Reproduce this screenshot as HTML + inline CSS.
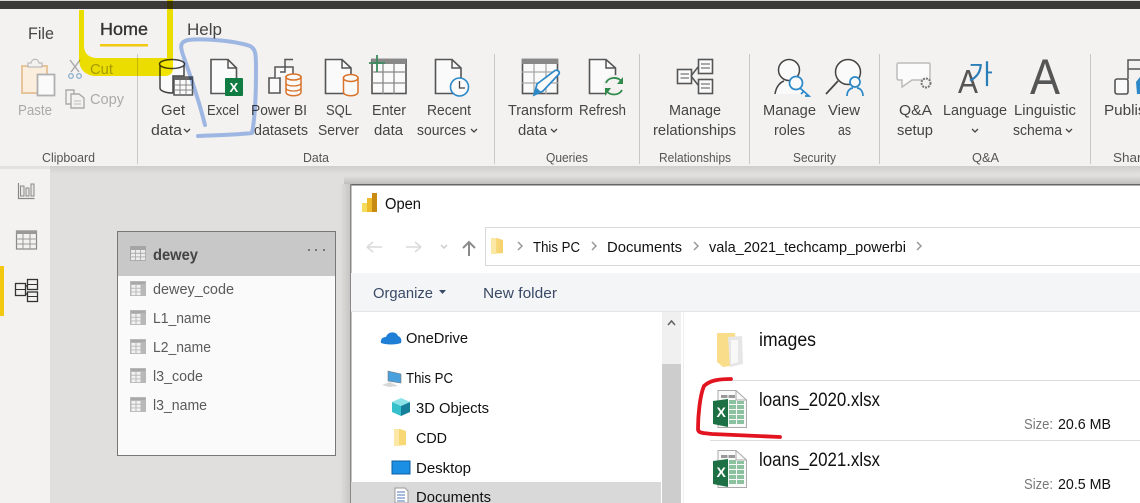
<!DOCTYPE html>
<html><head><meta charset="utf-8">
<style>
html,body{margin:0;padding:0;background:#e0dfdd;width:1140px;height:503px;overflow:hidden}
svg{display:block}
text{font-family:"Liberation Sans","Noto Sans CJK KR",sans-serif}
.r{font-size:15px;fill:#444}
.g{font-size:13px;fill:#555}
.d{font-size:15px;fill:#aaa}
.f{font-size:15px;fill:#111}
.n{font-size:15px;fill:#3a4a66}
.b{font-size:19px;fill:#111}
.s{font-size:15px;fill:#777}
.c{font-size:15px;fill:#5a5a5a}
.ic{fill:#fafafa;stroke:#555;stroke-width:1.6}
.or{fill:#fafafa;stroke:#d9732a;stroke-width:1.5}
</style></head><body>
<svg width="1140" height="503" viewBox="0 0 1140 503" xmlns="http://www.w3.org/2000/svg">
<defs>
<linearGradient id="shadow" x1="0" y1="0" x2="0" y2="1"><stop offset="0" stop-color="#cfcecc"/><stop offset="1" stop-color="#e0dfdd"/></linearGradient>
<linearGradient id="sht" x1="0" y1="0" x2="0" y2="1"><stop offset="0" stop-color="#e0dfdd"/><stop offset="1" stop-color="#c0bfbd"/></linearGradient>
<linearGradient id="shl" x1="0" y1="0" x2="1" y2="0"><stop offset="0" stop-color="#e0dfdd"/><stop offset="1" stop-color="#c4c3c1"/></linearGradient>
<linearGradient id="fold" x1="0" y1="0" x2="1" y2="0"><stop offset="0" stop-color="#fbe08a"/><stop offset="1" stop-color="#f5cf6a"/></linearGradient>
<g id="fi">
<rect x="0" y="0" width="16" height="15" fill="#b8b8b8"/>
<rect x="1" y="1" width="14" height="2" fill="#a8a8a8"/>
<g fill="#f0f0f0"><rect x="1.500" y="4" width="4" height="2.800"/><rect x="6.500" y="4" width="4" height="2.800"/><rect x="1.500" y="7.700" width="4" height="2.800"/><rect x="6.500" y="7.700" width="4" height="2.800"/><rect x="1.500" y="11.300" width="4" height="2.800"/><rect x="6.500" y="11.300" width="4" height="2.800"/></g>
</g>
<g id="fh">
<rect x="0" y="0" width="16" height="15" fill="#a5a5a5"/>
<g fill="#ececec"><rect x="1" y="4" width="4.200" height="2.800"/><rect x="6" y="4" width="4.200" height="2.800"/><rect x="11" y="4" width="4.200" height="2.800"/><rect x="1" y="7.700" width="4.200" height="2.800"/><rect x="6" y="7.700" width="4.200" height="2.800"/><rect x="11" y="7.700" width="4.200" height="2.800"/><rect x="1" y="11.300" width="4.200" height="2.800"/><rect x="6" y="11.300" width="4.200" height="2.800"/><rect x="11" y="11.300" width="4.200" height="2.800"/></g>
</g>
<g id="xl">
<path d="M5 .5H23L33.5 10V37.5H5Z" fill="#fafafa" stroke="#aaa"/>
<path d="M23 .5V10H33.5" fill="none" stroke="#aaa"/>
<rect x="8" y="5" width="6.500" height="3" fill="#999"/><rect x="15.500" y="5" width="6.500" height="3" fill="#999"/>
<g fill="#8cc2a0"><rect x="16" y="10" width="7" height="4"/><rect x="24" y="11" width="7" height="3"/><rect x="16" y="15" width="7" height="4"/><rect x="24" y="15" width="7" height="4"/><rect x="16" y="20" width="7" height="4"/><rect x="24" y="20" width="7" height="4"/><rect x="16" y="25" width="7" height="4"/><rect x="24" y="25" width="7" height="4"/><rect x="16" y="30" width="7" height="4"/><rect x="24" y="30" width="7" height="4"/></g>
<path d="M0 11L15 9V37L0 34Z" fill="#1d7044"/>
<text x="3.500" y="27" font-size="14" font-weight="bold" fill="#fff">X</text>
</g>
</defs>

<!-- base -->
<rect width="1140" height="503" fill="#e0dfdd"/>
<rect y="0" width="1140" height="1" fill="#d8d8d8"/>
<rect y="1" width="1140" height="8" fill="#3b3a39"/>
<rect y="9" width="1140" height="157" fill="#f3f2f1"/>
<rect y="166" x="50" width="1090" height="8" fill="url(#shadow)"/>
<rect y="166" x="0" width="50" height="337" fill="#f3f2f1"/>
<rect y="166" x="0" width="50" height="3" fill="#e2e1df"/>

<!-- tabs -->
<text x="28" y="39" font-size="17" fill="#444" textLength="26" lengthAdjust="spacingAndGlyphs">File</text>
<text x="100" y="35" font-size="17.500" fill="#333" stroke="#333" stroke-width=".35" textLength="48" lengthAdjust="spacingAndGlyphs">Home</text>
<rect x="100" y="44" width="48" height="2.500" fill="#f2c811"/>
<text x="187" y="35" font-size="17" fill="#444" textLength="35" lengthAdjust="spacingAndGlyphs">Help</text>

<!-- separators -->
<g fill="#c9c8c6"><rect x="137" y="54" width="1" height="110"/><rect x="494" y="54" width="1" height="110"/><rect x="639" y="54" width="1" height="110"/><rect x="749" y="54" width="1" height="110"/><rect x="879" y="54" width="1" height="110"/><rect x="1090" y="54" width="1" height="110"/></g>

<!-- clipboard icons -->
<path d="M22 66H47V93H22Z" fill="#fbeedd" stroke="#e6c49c" stroke-width="2"/>
<path d="M28 66V63H31C32 58 38 58 39 63H42V67H28Z" fill="#f3f2f1" stroke="#bbb" stroke-width="1.200"/>
<rect x="37.500" y="74.500" width="17" height="21" fill="#fafafa" stroke="#b0b0b0" stroke-width="1.800"/>
<path d="M70 60L79 72M80 60L71 72" stroke="#a8a8a8" stroke-width="1.400" fill="none"/>
<circle cx="71" cy="76" r="2.300" fill="none" stroke="#8fb3cf" stroke-width="1.400"/><circle cx="79" cy="76" r="2.300" fill="none" stroke="#8fb3cf" stroke-width="1.400"/>
<path d="M66 90H74L74 104H66Z" fill="#f3f2f1" stroke="#aaa" stroke-width="1.400"/>
<path d="M71 94H79L84 98V108H71Z" fill="#f3f2f1" stroke="#aaa" stroke-width="1.400"/>
<path d="M74 101H81M74 104H81" stroke="#bbb"/>
<text class="d" x="18" y="115" textLength="34" lengthAdjust="spacingAndGlyphs">Paste</text>
<text class="d" x="90" y="74" textLength="23" lengthAdjust="spacingAndGlyphs">Cut</text>
<text class="d" x="90" y="104" textLength="34" lengthAdjust="spacingAndGlyphs">Copy</text>
<text class="g" x="42" y="162" textLength="53" lengthAdjust="spacingAndGlyphs">Clipboard</text>

<!-- get data -->
<path d="M160 64V88C160 91 166 93 173 93V76H184V64Z" fill="#fafafa" stroke="#444" stroke-width="1.500"/>
<ellipse cx="172" cy="64" rx="12.500" ry="4.500" fill="#fafafa" stroke="#444" stroke-width="1.500"/>
<path d="M174 77H192.500V95H174Z" fill="#fafafa" stroke="#555" stroke-width="1.500"/>
<rect x="174" y="76.500" width="19" height="3.500" fill="#666"/>
<path d="M180 80V95M186 80V95M174 85H193M174 90H193" stroke="#888"/>
<!-- excel -->
<path d="M211 59.500H228L236.500 68V93.500H211Z" class="ic"/><path d="M228 59.500V68H236.500" fill="none" stroke="#555" stroke-width="1.500"/>
<rect x="225" y="78" width="18" height="18" rx="1" fill="#107c41"/>
<text x="229.500" y="92" font-size="13" font-weight="bold" fill="#fff">X</text>
<!-- PBI datasets -->
<path d="M269 78H280V93H269Z" class="ic"/><path d="M275 78V67H293V74" fill="#fafafa" stroke="#555" stroke-width="1.500"/><path d="M280 72H285V59.500H293" fill="none" stroke="#555" stroke-width="1.500"/>
<path d="M286 77V92C286 97 301 97 301 92V77Z" class="or"/><ellipse cx="293.500" cy="77" rx="7.500" ry="3" class="or"/><path d="M286 83C286 87 301 87 301 83M286 88C286 92 301 92 301 88" fill="none" stroke="#d9732a" stroke-width="1.300"/>
<!-- SQL -->
<path d="M325.500 59.500H342L351 68V93.500H325.500Z" class="ic"/><path d="M342 59.500V68H351" fill="none" stroke="#555" stroke-width="1.500"/>
<path d="M343.500 78V92C343.500 97 358 97 358 92V78Z" class="or"/><ellipse cx="350.700" cy="78" rx="7.300" ry="3.500" class="or"/>
<!-- enter -->
<rect x="372" y="59.500" width="34" height="34" class="ic"/><rect x="372" y="59" width="34" height="5" fill="#888"/>
<path d="M383 64V94M394 64V94M372 72H406M372 83H406" stroke="#888" stroke-width="1.300"/>
<path d="M377 55V72M369 63H385" stroke="#3b8a5c" stroke-width="1.800"/>
<!-- recent -->
<path d="M435.500 59.500H452L461 68V93.500H435.500Z" class="ic"/><path d="M452 59.500V68H461" fill="none" stroke="#555" stroke-width="1.500"/>
<circle cx="459.500" cy="87" r="9" fill="#fafafa" stroke="#2b88c8" stroke-width="1.600"/><path d="M459.500 81V88H465" fill="none" stroke="#444" stroke-width="1.300"/>
<!-- transform -->
<rect x="522.500" y="59.500" width="35" height="34" class="ic"/><rect x="522" y="59" width="36" height="5" fill="#888"/>
<path d="M534 64V94M546 64V94M522 72H558M522 83H558" stroke="#aaa" stroke-width="1.300"/>
<path d="M534 95L537 84L555 70.500C558 69.500 560 72 559 74L543 91Z" fill="#fafafa" stroke="#2b88c8" stroke-width="1.700"/><path d="M534 95L537 88L541 92Z" fill="#2b88c8"/>
<!-- refresh -->
<path d="M589.500 59.500H606L615.500 68V93.500H589.500Z" class="ic"/><path d="M606 59.500V68H615.500" fill="none" stroke="#555" stroke-width="1.500"/>
<circle cx="614" cy="86" r="11" fill="#f3f2f1"/>
<path d="M606 83C608 77 618 76 622 82M622 90C619 96 609 96 606 90" fill="none" stroke="#2f8a4c" stroke-width="1.800"/><path d="M623 77V84H617ZM605 96V88H611Z" fill="#2f8a4c"/>
<!-- manage rel -->
<rect x="677.500" y="69.500" width="14" height="14" class="ic"/><rect x="698.500" y="59.500" width="14" height="14" class="ic"/><rect x="698.500" y="79.500" width="14" height="14" class="ic"/>
<path d="M691 76L698 67M691 76L698 85" stroke="#555" stroke-width="1.500"/>
<path d="M680.500 74H689M680.500 78H689M701 64H710M701 68H710M701 84H710M701 88H710" stroke="#777" stroke-width="1.300"/>
<!-- manage roles -->
<circle cx="789" cy="70" r="10.500" fill="#fafafa" stroke="#444" stroke-width="1.500"/>
<path d="M775 94C776 86 781 82 785 81C790 83 794 82 798 81L806 94Z" fill="#fafafa"/><path d="M775 94C776 88 779 83 784 81" fill="none" stroke="#444" stroke-width="1.500"/>
<circle cx="796" cy="83" r="6.500" fill="#fafafa" stroke="#2b88c8" stroke-width="1.700"/><path d="M800 88L809 96H805M804 91L801 94" fill="none" stroke="#2b88c8" stroke-width="1.700"/>
<!-- view as -->
<circle cx="848" cy="72" r="12.500" fill="#fafafa" stroke="#444" stroke-width="1.500"/><path d="M838 81L826 94" stroke="#444" stroke-width="1.700"/>
<circle cx="855" cy="82" r="5" fill="#fafafa" stroke="#2b88c8" stroke-width="1.700"/><path d="M847 96C847 90 851 88 853 88M857 88C860 88 863 91 863 96" fill="none" stroke="#2b88c8" stroke-width="1.700"/>
<!-- qa -->
<path d="M898 63H929Q930 63 930 65V80H912L902 87V80H899Q897 80 897 78V65Q897 63 898 63Z" fill="#fbfbfb" stroke="#bbb" stroke-width="1.500"/>
<circle cx="926" cy="83" r="4.500" fill="#f3f2f1" stroke="#777" stroke-width="2" stroke-dasharray="2 1"/>
<!-- language -->
<text x="958" y="93" font-size="33" fill="#555" textLength="20" lengthAdjust="spacingAndGlyphs">A</text>
<text x="968" y="84" font-size="27" fill="#2b7fb8">가</text>
<!-- linguistic -->
<text x="1030" y="94" font-size="50" fill="#555" textLength="30" lengthAdjust="spacingAndGlyphs">A</text>
<!-- publish -->
<rect x="1115" y="79" width="13" height="15" rx="2" class="ic"/><path d="M1128 79V69H1140M1128 69V60H1140" fill="none" stroke="#555" stroke-width="1.500"/><path d="M1136 82L1140 77V94H1137Z" fill="#2b88c8"/>

<!-- ribbon labels -->
<text class="r" x="161" y="115" textLength="24" lengthAdjust="spacingAndGlyphs">Get</text>
<text class="r" x="151" y="135" textLength="31" lengthAdjust="spacingAndGlyphs">data</text>
<text class="r" x="207" y="115" textLength="32" lengthAdjust="spacingAndGlyphs">Excel</text>
<text class="r" x="251" y="115" textLength="56" lengthAdjust="spacingAndGlyphs">Power BI</text>
<text class="r" x="254" y="135" textLength="54" lengthAdjust="spacingAndGlyphs">datasets</text>
<text class="r" x="326" y="115" textLength="26" lengthAdjust="spacingAndGlyphs">SQL</text>
<text class="r" x="318" y="135" textLength="41" lengthAdjust="spacingAndGlyphs">Server</text>
<text class="r" x="372" y="115" textLength="34" lengthAdjust="spacingAndGlyphs">Enter</text>
<text class="r" x="374" y="135" textLength="29" lengthAdjust="spacingAndGlyphs">data</text>
<text class="r" x="427" y="115" textLength="44" lengthAdjust="spacingAndGlyphs">Recent</text>
<text class="r" x="417" y="135" textLength="49" lengthAdjust="spacingAndGlyphs">sources</text>
<text class="r" x="508" y="115" textLength="65" lengthAdjust="spacingAndGlyphs">Transform</text>
<text class="r" x="518" y="135" textLength="29" lengthAdjust="spacingAndGlyphs">data</text>
<text class="r" x="579" y="115" textLength="47" lengthAdjust="spacingAndGlyphs">Refresh</text>
<text class="r" x="669" y="115" textLength="52" lengthAdjust="spacingAndGlyphs">Manage</text>
<text class="r" x="653" y="135" textLength="83" lengthAdjust="spacingAndGlyphs">relationships</text>
<text class="r" x="763" y="115" textLength="53" lengthAdjust="spacingAndGlyphs">Manage</text>
<text class="r" x="774" y="135" textLength="31" lengthAdjust="spacingAndGlyphs">roles</text>
<text class="r" x="828" y="115" textLength="32" lengthAdjust="spacingAndGlyphs">View</text>
<text class="r" x="838" y="135" textLength="13" lengthAdjust="spacingAndGlyphs">as</text>
<text class="r" x="899" y="115" textLength="33" lengthAdjust="spacingAndGlyphs">Q&amp;A</text>
<text class="r" x="897" y="135" textLength="36" lengthAdjust="spacingAndGlyphs">setup</text>
<text class="r" x="943" y="115" textLength="64" lengthAdjust="spacingAndGlyphs">Language</text>
<text class="r" x="1014" y="115" textLength="62" lengthAdjust="spacingAndGlyphs">Linguistic</text>
<text class="r" x="1013" y="135" textLength="49" lengthAdjust="spacingAndGlyphs">schema</text>
<text class="r" x="1104" y="115" textLength="50" lengthAdjust="spacingAndGlyphs">Publish</text>
<g fill="none" stroke="#444" stroke-width="1.300"><path d="M184 129L187 132L190 129M471 129L474 132L477 129M551 129L554 132L557 129M972 129L975 132L978 129M1066 129L1069 132L1072 129"/></g>
<text class="g" x="303" y="162" textLength="26" lengthAdjust="spacingAndGlyphs">Data</text>
<text class="g" x="546" y="162" textLength="42" lengthAdjust="spacingAndGlyphs">Queries</text>
<text class="g" x="659" y="162" textLength="72" lengthAdjust="spacingAndGlyphs">Relationships</text>
<text class="g" x="793" y="162" textLength="43" lengthAdjust="spacingAndGlyphs">Security</text>
<text class="g" x="972" y="162" textLength="27" lengthAdjust="spacingAndGlyphs">Q&amp;A</text>
<text class="g" x="1113" y="162" textLength="36" lengthAdjust="spacingAndGlyphs">Share</text>

<!-- left rail -->
<rect x="0" y="266" width="4" height="50" fill="#f2c811"/>
<path d="M18.500 183V198.500H34.500" fill="none" stroke="#888" stroke-width="1.200"/>
<path d="M20.500 186H24V196H20.500ZM26 188H29V196H26ZM31 184H34V196H31Z" fill="#e8e7e5" stroke="#888"/>
<rect x="16.500" y="231" width="20" height="18" fill="#f3f2f1" stroke="#888" stroke-width="1.200"/><rect x="16" y="231" width="21" height="3" fill="#999"/>
<path d="M23 234V249M30 234V249M16 239H37M16 244H37" stroke="#999"/>
<g fill="#f3f2f1" stroke="#333" stroke-width="1.300"><rect x="15.500" y="283.500" width="10" height="12"/><rect x="27.500" y="279.500" width="10" height="10"/><rect x="27.500" y="292" width="10" height="9.500"/></g>
<path d="M15.500 289.500H25.500M27.500 284.500H37.500M27.500 296.500H37.500M25.500 287L27.500 285M25.500 293L27.500 295" stroke="#333" fill="none"/>

<!-- model card -->
<rect x="117.500" y="231.500" width="218" height="224" fill="#fafafa" stroke="#777"/>
<rect x="118" y="232" width="217" height="44" fill="#c8c8c8"/>
<use href="#fh" x="130" y="246"/>
<text x="153" y="260" font-size="16" font-weight="bold" fill="#444" textLength="45" lengthAdjust="spacingAndGlyphs">dewey</text>
<g fill="#777"><rect x="308" y="249" width="2" height="2"/><rect x="315" y="249" width="2" height="2"/><rect x="323" y="249" width="2" height="2"/></g>
<use href="#fi" x="130" y="281"/><text class="c" x="153" y="294" textLength="81" lengthAdjust="spacingAndGlyphs">dewey_code</text>
<use href="#fi" x="130" y="310"/><text class="c" x="153" y="323" textLength="58" lengthAdjust="spacingAndGlyphs">L1_name</text>
<use href="#fi" x="130" y="339"/><text class="c" x="153" y="352" textLength="58" lengthAdjust="spacingAndGlyphs">L2_name</text>
<use href="#fi" x="130" y="368"/><text class="c" x="153" y="381" textLength="50" lengthAdjust="spacingAndGlyphs">l3_code</text>
<use href="#fi" x="130" y="397"/><text class="c" x="153" y="410" textLength="54" lengthAdjust="spacingAndGlyphs">l3_name</text>
<rect x="347" y="338" width="2" height="7" fill="#555"/>

<!-- dialog -->
<rect x="340" y="184" width="11" height="319" fill="url(#shl)"/>
<rect x="344" y="176" width="796" height="8" fill="url(#sht)"/>
<rect x="350" y="184" width="790" height="319" fill="#fff"/>
<rect x="350" y="184" width="790" height="1.500" fill="#666"/>
<rect x="350" y="184" width="1.500" height="319" fill="#888"/>
<rect x="362" y="203" width="5" height="9" fill="#f5dc5c"/><rect x="367" y="198" width="5" height="14" fill="#eebc2a"/><rect x="372" y="193" width="5" height="19" fill="#c98a12"/>
<text x="385" y="209" font-size="15.500" fill="#111" textLength="36" lengthAdjust="spacingAndGlyphs">Open</text>

<path d="M367 247H382M367 247L373 242M367 247L373 252M406 247H421M421 247L415 242M421 247L415 252" fill="none" stroke="#dadada" stroke-width="1.500"/>
<path d="M441 245L444 248L447 245" fill="none" stroke="#ccc" stroke-width="1.500"/>
<path d="M469 256V243M463 248L469 242L475 248" fill="none" stroke="#8a8a8a" stroke-width="2"/>
<rect x="485.500" y="227.500" width="670" height="38" fill="#fff" stroke="#d9d9d9"/>
<path d="M491 238H497L503 240V253L491 254Z" fill="url(#fold)"/><path d="M491 238H496V254H491Z" fill="#fbe7a6"/>
<g fill="none" stroke="#999" stroke-width="1.500"><path d="M518 242L522 246L518 250M592 242L596 246L592 250M694 242L698 246L694 250M917 242L921 246L917 250"/></g>
<text class="f" x="533" y="252" textLength="47" lengthAdjust="spacingAndGlyphs">This PC</text>
<text class="f" x="607" y="252" textLength="75" lengthAdjust="spacingAndGlyphs">Documents</text>
<text class="f" x="709" y="252" textLength="197" lengthAdjust="spacingAndGlyphs">vala_2021_techcamp_powerbi</text>

<rect x="351" y="273" width="789" height="38" fill="#f4f5f7"/>
<rect x="351" y="311" width="789" height="1" fill="#e5e5e5"/>
<text class="n" x="373" y="298" textLength="60" lengthAdjust="spacingAndGlyphs">Organize</text>
<path d="M439 290H446L442.500 294Z" fill="#3a4a66"/>
<text class="n" x="483" y="298" textLength="74" lengthAdjust="spacingAndGlyphs">New folder</text>

<!-- nav pane -->
<rect x="662" y="312" width="19" height="191" fill="#f0f0f0"/>
<rect x="662" y="364" width="19" height="139" fill="#cdcdcd"/>
<path d="M668 325L671.500 321L675 325" fill="none" stroke="#666" stroke-width="1.600"/>
<rect x="683" y="312" width="1" height="191" fill="#efefef"/>
<rect x="351" y="482" width="310" height="21" fill="#d9d9d9"/>
<path d="M381 343C380 338 384 337 386 337C388 331 396 331 398 336C401 337 402 340 401 343C396 345 386 345 381 343Z" fill="#1f7fd6"/>
<text class="f" x="406" y="343" textLength="62" lengthAdjust="spacingAndGlyphs">OneDrive</text>
<path d="M388 371L401 374V383L388 381Z" fill="#4aa0dc" stroke="#777" stroke-width=".6"/><path d="M382 385L390 382L398 386L389 387Z" fill="#d8d8d8"/>
<text class="f" x="406" y="383" textLength="47" lengthAdjust="spacingAndGlyphs">This PC</text>
<path d="M392 402L401 398L410 402L401 406Z" fill="#8be3e8"/><path d="M392 402L401 406V416L392 412Z" fill="#35c0cc"/><path d="M401 406L410 402V412L401 416Z" fill="#167f99"/>
<text class="f" x="416" y="413" textLength="73" lengthAdjust="spacingAndGlyphs">3D Objects</text>
<path d="M394 429H400L406 431V445L394 446Z" fill="#f8d775"/><path d="M394 429H399V446H394Z" fill="#fbe7a6"/>
<text class="f" x="416" y="443" textLength="31" lengthAdjust="spacingAndGlyphs">CDD</text>
<rect x="392" y="461" width="18" height="13" fill="#1a8fe3" stroke="#0f5f9f"/>
<text class="f" x="416" y="473" textLength="55" lengthAdjust="spacingAndGlyphs">Desktop</text>
<path d="M395 488H405L408 491V503H395Z" fill="#fff" stroke="#999"/><path d="M397 492H405M397 495H405M397 498H405M397 501H405" stroke="#4d7ab5"/>
<text class="f" x="416" y="502" textLength="75" lengthAdjust="spacingAndGlyphs">Documents</text>

<!-- files -->
<path d="M717 333H735L737 365L723 367L717 362Z" fill="#f9dd8b"/><path d="M728 337L742 336L743 364L730 367Z" fill="#e6e6e6"/><path d="M731 340L738 340L738 362L731 364Z" fill="#f8f8f8"/>
<text class="b" x="759" y="346" textLength="57" lengthAdjust="spacingAndGlyphs">images</text>
<rect x="710" y="380" width="430" height="1" fill="#dcdcdc"/>
<rect x="710" y="440" width="430" height="1" fill="#dcdcdc"/>
<use href="#xl" x="713" y="390"/>
<text class="b" x="759" y="406" textLength="121" lengthAdjust="spacingAndGlyphs">loans_2020.xlsx</text>
<text class="s" x="1024" y="429" textLength="29" lengthAdjust="spacingAndGlyphs">Size:</text>
<text class="f" x="1058" y="429" textLength="53" lengthAdjust="spacingAndGlyphs">20.6 MB</text>
<use href="#xl" x="713" y="450"/>
<text class="b" x="759" y="466" textLength="121" lengthAdjust="spacingAndGlyphs">loans_2021.xlsx</text>
<text class="s" x="1024" y="489" textLength="29" lengthAdjust="spacingAndGlyphs">Size:</text>
<text class="f" x="1058" y="489" textLength="53" lengthAdjust="spacingAndGlyphs">20.5 MB</text>

<!-- annotations -->
<path d="M731 379C720 379 710 380 704 386C700 395 698 415 698 429C698 433 702 433 712 434C735 435 760 436 780 437" fill="none" stroke="#e2141f" stroke-width="3.800" stroke-linecap="round" stroke-linejoin="round"/>
<g style="mix-blend-mode:multiply">
<path d="M79 10H84V47Q85 57 96 58H167V0H173V68Q173 75 166 76H94Q80 74 79 60Z" fill="#f8e900"/>
</g>
<g style="mix-blend-mode:multiply">
<path d="M205 125C200 105 192 80 183 55C180 46 180 42 188 40C205 38 235 41 250 46C256 49 256 55 256 70C256 95 255 118 252 133C235 135 215 135 198 136" fill="none" stroke="#a6c0f0" stroke-width="4" stroke-linecap="round" stroke-linejoin="round"/>
</g>
</svg>
</body></html>
